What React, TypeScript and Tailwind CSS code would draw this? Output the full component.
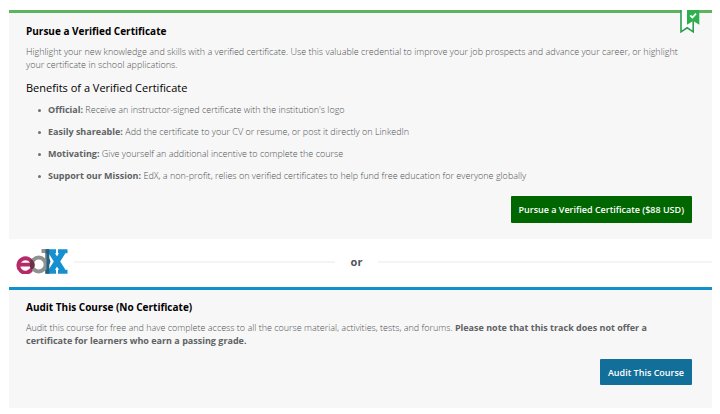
import React from 'react';

const benefits = [
  { label: 'Official:', text: "Receive an instructor-signed certificate with the institution's logo" },
  { label: 'Easily shareable:', text: 'Add the certificate to your CV or resume, or post it directly on LinkedIn' },
  { label: 'Motivating:', text: 'Give yourself an additional incentive to complete the course' },
  { label: 'Support our Mission:', text: 'EdX, a non-profit, relies on verified certificates to help fund free education for everyone globally' },
];

function Ribbon() {
  return (
    <svg viewBox="0 0 20 24" className="absolute -top-[3px] right-3 h-6 w-5" aria-hidden="true">
      <path d="M1 0H13.2V21.8L7.2 17.8L1 21.8Z" fill="#fff" />
      <path d="M1 0V21.8L7.2 17.8L13.2 21.8V10" fill="none" stroke="#2a9d50" strokeWidth="1.6" />
      <path d="M7 0H19.3V14.8L13.2 11L7 14.8Z" fill="#2fb04f" />
      <path d="M10.3 5.3L12.4 7.5L16 3.6" fill="none" stroke="#fff" strokeWidth="1.8" />
    </svg>
  );
}

function EdxLogo() {
  return (
    <svg viewBox="0 0 52 25" className="h-[25px] w-[52px] shrink-0" role="img" aria-label="edX">
      <path d="M16.3 19A7.2 7.2 0 1 1 16.7 15.6H3" fill="none" stroke="#b52a67" strokeWidth="3.8" />
      <circle cx="22.7" cy="15.5" r="7" fill="none" stroke="#8f9192" strokeWidth="4" />
      <path d="M25.5 2H31V24.5" fill="none" stroke="#8f9192" strokeWidth="4" />
      <path d="M35 3L47 22M47 3L35 22" stroke="#1690cf" strokeWidth="5.4" />
      <path d="M30 2.2H40M42 2.2H51.5M30 22.8H40M42 22.8H51.5" stroke="#1690cf" strokeWidth="4" />
      <path d="M29.5 0.2H33.3V9L34.5 12.5L33.3 16V24.8H29.5V20.8H30.5V4.2H29.5Z" fill="#24607f" />
      <path d="M15 10Q18.5 12 18.5 15.5Q18.5 19 15.5 21Q13.5 18 13.7 15.5Q13.7 12.5 15 10Z" fill="#693047" />
    </svg>
  );
}

export default function App() {
  return (
    <main className="bg-white pt-[10px] pr-2 pb-[6px] pl-[9px] font-['Open_Sans',sans-serif] text-[9px] leading-[13px] font-light text-[#505254]">
      <section className="relative border-t-[3px] border-[#5eb35e] bg-[#f7f7f7] pt-[10px] pb-4 pl-[17px]">
        <Ribbon />
        <h2 className="text-[10px] leading-4 font-bold text-black">Pursue a Verified Certificate</h2>
        <p className="mt-[6px] pr-5">
          Highlight your new knowledge and skills with a verified certificate. Use this valuable credential to improve
          your job prospects and advance your career, or highlight your certificate in school applications.
        </p>
        <h3 className="mt-[9px] text-[11px] leading-4 font-normal text-black">Benefits of a Verified Certificate</h3>
        <ul className="mt-[3px] pl-3 leading-[22px]">
          {benefits.map((item) => (
            <li
              key={item.label}
              className="flex items-center gap-[7px] before:size-[3px] before:rounded-full before:bg-[#6f7173] before:content-['']"
            >
              <span>
                <strong className="font-bold text-[#606264]">{item.label}</strong> {item.text}
              </span>
            </li>
          ))}
        </ul>
        <div className="mt-[9px] flex justify-end pr-5">
          <button type="button" className="h-[27px] rounded-[1px] bg-[#006600] px-2 text-[9px] font-semibold text-white">
            Pursue a Verified Certificate ($88 USD)
          </button>
        </div>
      </section>

      <div className="grid h-12 grid-cols-[326fr_43px_334fr] items-center pb-1">
        <div className="flex items-center gap-[6px] pl-[7px]">
          <EdxLogo />
          <div className="mt-[2px] h-[2px] flex-1 bg-[#f4f4f4]" />
        </div>
        <span className="text-center text-[11px] font-bold">or</span>
        <div className="mt-[2px] h-[2px] bg-[#f4f4f4]" />
      </div>

      <section className="border-t-[3px] border-[#128fcd] bg-[#f7f7f7] pt-[9px] pb-[23px] pl-[17px]">
        <h2 className="text-[10px] leading-4 font-bold text-black">Audit This Course (No Certificate)</h2>
        <p className="mt-[6px] pr-5">
          Audit this course for free and have complete access to all the course material, activities, tests, and
          forums.{' '}
          <strong className="font-bold text-[#606264]">
            Please note that this track does not offer a certificate for learners who earn a passing grade.
          </strong>
        </p>
        <div className="mt-3 flex justify-end pr-5">
          <button type="button" className="h-[26px] rounded-[1px] bg-[#126f9a] px-2 text-[9px] font-semibold text-white">
            Audit This Course
          </button>
        </div>
      </section>
    </main>
  );
}
